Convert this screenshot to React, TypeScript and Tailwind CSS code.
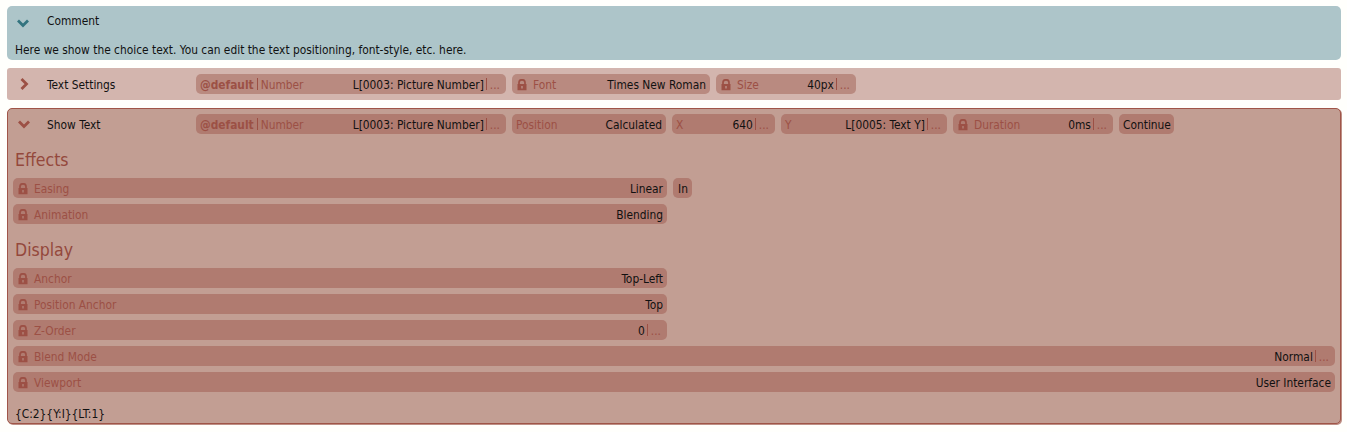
const FONT = "font-['DejaVu_Sans','Noto_Sans',sans-serif] font-stretch-condensed";

function Lock() {
  return (
    <svg width="10" height="12" viewBox="0 0 10 12" className="shrink-0 text-[#9c5045]">
      <path d="M2 5.5V3.6C2 1.8 3.2.8 5 .8s3 1 3 2.8v1.9" fill="none" stroke="currentColor" strokeWidth="1.7" />
      <path d="M.5 5h9v6.2H.5zM4.2 7v2.4h1.6V7z" fill="currentColor" fillRule="evenodd" />
    </svg>
  );
}

function Pill({ w, tone, lock, def, label, value, more }: { w: string; tone: string; lock?: boolean; def?: boolean; label?: string; value?: string; more?: boolean }) {
  return (
    <div className={`${w} ${tone} h-5 shrink-0 rounded-[5px] flex items-center pl-1 pr-1 text-[11.85px] leading-5 whitespace-nowrap`}>
      {lock && <span className="ml-[1px] mr-[6px] mt-[1px] flex"><Lock /></span>}
      {def && <span className="font-bold text-[#9c5045] mr-[3px] pt-[2px]">@default</span>}
      {def && <span className="w-px h-3 bg-[#9c5045] mr-[3px]" />}
      {label && <span className="text-[#9c5045] pt-[2px]">{label}</span>}
      <span className="ml-auto text-[#111] pt-[2px]">{value}</span>
      {more && <span className="w-px h-3 bg-[#9c5045] ml-[2px] mr-[3px]" />}
      {more && <span className="text-[#9c5045] pr-[2px] pt-[2px]">...</span>}
    </div>
  );
}

function Chevron({ dir, color }: { dir: "down" | "right"; color: string }) {
  return (
    <svg width="14" height="14" viewBox="0 0 14 14" className="shrink-0" style={{ color }}>
      <path d={dir === "down" ? "M2 4.5 7 9.5 12 4.5" : "M4.5 2 9.5 7 4.5 12"} fill="none" stroke="currentColor" strokeWidth="2.8" />
    </svg>
  );
}

export default function App() {
  const a = "bg-[#b98a80]";
  const b = "bg-[#b07b70]";
  return (
    <div className={`${FONT} w-[1347px] h-[432px] bg-[#fffffc] pt-[6px] pl-[7px] pr-[6px] flex flex-col gap-2 text-[11.85px] text-[#111] overflow-hidden`}>
      <section className="h-[54px] rounded-[5px] bg-[#adc5c9]">
        <div className="h-[30px] flex items-center pl-[9px]">
          <span className="mt-[3px] flex"><Chevron dir="down" color="#33747f" /></span>
          <span className="ml-[17px] mt-[1px]">Comment</span>
        </div>
        <div className="pl-2 mt-[6px] leading-4">Here we show the choice text. You can edit the text positioning, font-style, etc. here.</div>
      </section>

      <section className="h-8 rounded-[3px] bg-[#d3b5ae] flex items-center pl-[10px]">
        <Chevron dir="right" color="#9c5045" />
        <span className="ml-4 w-[149px] pt-[3px]">Text Settings</span>
        <div className="flex gap-[6px]">
          <Pill w="w-[310px]" tone={a} def label="Number" value="L[0003: Picture Number]" more />
          <Pill w="w-[198px]" tone={a} lock label="Font" value="Times New Roman" />
          <Pill w="w-[140px]" tone={a} lock label="Size" value="40px" more />
        </div>
      </section>

      <section className="h-[316px] rounded-[5px] bg-[#c29e93] border border-[#a05548] shadow-[1px_1px_0_#bd8f85] px-[5px] flex flex-col">
        <div className="h-[30px] flex items-center shrink-0">
          <span className="ml-[4px] flex"><Chevron dir="down" color="#9c5045" /></span>
          <span className="ml-[16px] w-[149px] pt-[3px]">Show Text</span>
          <div className="flex gap-[6px]">
            <Pill w="w-[310px]" tone={b} def label="Number" value="L[0003: Picture Number]" more />
            <Pill w="w-[154px]" tone={b} label="Position" value="Calculated" />
            <Pill w="w-[103px]" tone={b} label="X" value="640" more />
            <Pill w="w-[166px]" tone={b} label="Y" value="L[0005: Text Y]" more />
            <Pill w="w-[160px]" tone={b} lock label="Duration" value="0ms" more />
            <Pill w="w-[55px]" tone={b} value="Continue" />
          </div>
        </div>

        <h2 className="text-[17.5px] leading-6 text-[#94483c] mt-[9px] ml-[2px]">Effects</h2>
        <div className="flex gap-[6px] mt-[6px]">
          <Pill w="w-[654px]" tone={b} lock label="Easing" value="Linear" />
          <Pill w="w-[19px]" tone={b} value="In" />
        </div>
        <div className="mt-[6px]"><Pill w="w-[654px]" tone={b} lock label="Animation" value="Blending" /></div>

        <h2 className="text-[17.5px] leading-6 text-[#94483c] mt-[14px] ml-[2px]">Display</h2>
        <div className="flex flex-col gap-[6px] mt-[6px]">
          <Pill w="w-[654px]" tone={b} lock label="Anchor" value="Top-Left" />
          <Pill w="w-[654px]" tone={b} lock label="Position Anchor" value="Top" />
          <Pill w="w-[654px]" tone={b} lock label="Z-Order" value="0" more />
          <Pill w="w-[1322px]" tone={b} lock label="Blend Mode" value="Normal" more />
          <Pill w="w-[1322px]" tone={b} lock label="Viewport" value="User Interface" />
        </div>
        <div className="mt-[14px] ml-[2px] leading-4">{"{C:2}{Y:I}{LT:1}"}</div>
      </section>
    </div>
  );
}
